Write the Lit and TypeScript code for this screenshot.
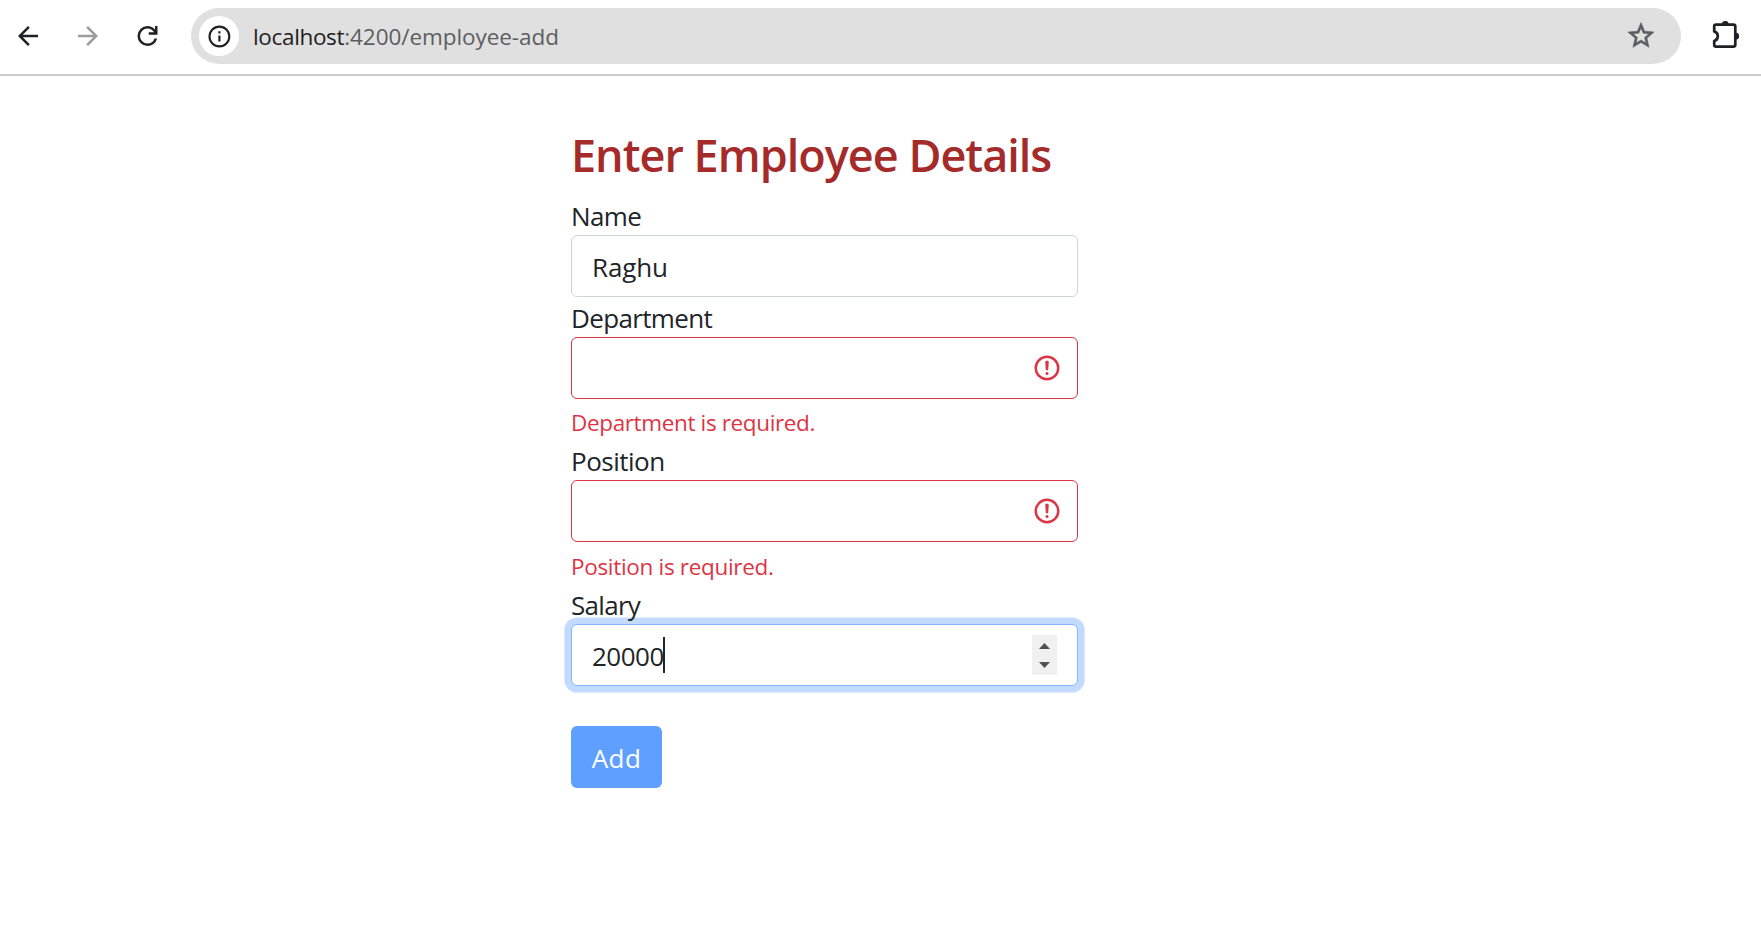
import { LitElement, html, css, nothing } from "lit";
import { customElement, property } from "lit/decorators.js";
import { classMap } from "lit/directives/class-map.js";

@customElement("browser-bar")
export class BrowserBar extends LitElement {
  static styles = css`
    :host {
      display: flex;
      align-items: flex-start;
      box-sizing: border-box;
      height: 76px;
      padding: 8px 0 0 13px;
      border-bottom: 2px solid #cccccc;
      background: #fff;
      font-family: "Open Sans", sans-serif;
      color: #202124;
    }
    svg { display: block; flex: none; }
    .nav { display: flex; gap: 30px; align-items: center; height: 56px; }
    .muted { color: #9c9c9d; }
    .address {
      display: flex;
      align-items: center;
      box-sizing: border-box;
      width: 1490px;
      height: 56px;
      margin-left: 28px;
      padding: 0 24px 0 8px;
      border-radius: 28px;
      background: #e0e0e0;
    }
    .info {
      display: grid;
      place-items: center;
      width: 40px;
      height: 40px;
      border-radius: 50%;
      background: #fff;
    }
    .url {
      flex: 1;
      padding: 1px 0 0 14px;
      font-size: 22.5px;
      line-height: 56px;
      color: #5d5e60;
      letter-spacing: -0.066px;
      white-space: nowrap;
    }
    .host { color: #1f2023; letter-spacing: -0.341px; }
    .star { color: #5c5d60; }
    .ext { margin: 10px 0 0 28px; }
  `;

  render() {
    return html`
      <div class="nav">
        <svg width="30" height="30" viewBox="0 0 24 24" fill="currentColor">
          <path d="M7.83 13l5.6 5.6L12 20l-8-8 8-8 1.43 1.4L7.83 11H20v2z" />
        </svg>
        <svg class="muted" width="30" height="30" viewBox="0 0 24 24" fill="currentColor">
          <path d="M16.17 13l-5.6 5.6L12 20l8-8-8-8-1.43 1.4 5.6 5.6H4v2z" />
        </svg>
        <svg width="30" height="30" viewBox="16 -960 960 960" fill="currentColor">
          <path d="M480-160q-134 0-227-93t-93-227q0-134 93-227t227-93q69 0 132 28.500T720-690v-110h80v280H520v-80h168q-32-56-87.500-88T480-720q-100 0-170 70t-70 170q0 100 70 170t170 70q77 0 139-44t87-116h84q-28 106-114 173t-196 67Z" />
        </svg>
      </div>
      <div class="address">
        <span class="info">
          <svg width="24" height="24" viewBox="0 0 24 24">
            <circle cx="12.400" cy="12.500" r="9.900" fill="none" stroke="currentColor" stroke-width="2.100" />
            <path d="M11.300 11.500h2.200v6h-2.200zM11.300 7.300h2.200v2.200h-2.200z" fill="currentColor" />
          </svg>
        </span>
        <div class="url"><span class="host">localhost</span>:4200/employee-add</div>
        <svg class="star" width="32" height="32" viewBox="-0.300 0 24.600 24.600" fill="currentColor" stroke="currentColor" stroke-width="0.450">
          <path d="M22 9.240l-7.190-.62L12 2 9.190 8.630 2 9.240l5.460 4.730L5.820 21 12 17.270 18.180 21l-1.630-7.030zM12 15.400l-3.760 2.270 1-4.280-3.320-2.880 4.380-.38L12 6.100l1.710 4.040 4.380.38-3.320 2.880 1 4.280z" />
        </svg>
      </div>
      <svg class="ext" width="36" height="36" viewBox="0 0 36 36">
        <path d="M7 6.700H24.500Q26.300 6.700 26.300 8.500V26.800Q26.300 28.600 24.500 28.600H7Q5.200 28.600 5.200 26.800V23A5 5 0 0 0 5.200 13.400V8.500Q5.200 6.700 7 6.700Z" fill="none" stroke="currentColor" stroke-width="2.700" stroke-linejoin="round" />
        <path d="M12.900 6.500a3.400 3.400 0 0 1 6.800 0zM26.700 14.800a3.400 3.400 0 0 1 0 6.800z" fill="currentColor" />
      </svg>
    `;
  }
}

@customElement("form-field")
export class FormField extends LitElement {
  @property() label = "";
  @property() value = "";
  @property() error = "";
  @property() kind = "text";
  @property({ type: Boolean }) active = false;

  static styles = css`
    :host { display: block; }
    .label {
      height: 40px;
      font-size: 26px;
      line-height: 42px;
      letter-spacing: -0.600px;
      color: #212529;
      position: relative;
      z-index: 1;
    }
    .department { letter-spacing: -0.648px; }
    .position { letter-spacing: -0.500px; }
    .salary { letter-spacing: -0.700px; }
    .control {
      display: flex;
      align-items: center;
      justify-content: space-between;
      box-sizing: border-box;
      height: 62px;
      padding: 0 15px 0 20px;
      border: 1px solid #ced4da;
      border-radius: 6px;
      background: #fff;
      color: #212529;
    }
    .control.invalid { border-color: #dc3545; }
    .control.active {
      padding-right: 20px;
      border-color: #86b7fe;
      box-shadow: 0 0 0 6.600px #c2dbfe;
    }
    .value {
      display: flex;
      align-items: center;
      font-size: 26px;
      line-height: 60px;
      letter-spacing: -0.139px;
    }
    .value span { padding-top: 2px; }
    .value.number { letter-spacing: -0.500px; }
    .caret { width: 2px; height: 36px; margin-left: -0.500px; background: #212529; }
    .spinner {
      display: flex;
      flex-direction: column;
      justify-content: space-between;
      align-items: center;
      box-sizing: border-box;
      width: 25px;
      height: 40px;
      padding: 8px 0 7px;
      background: #f0f0f0;
    }
    svg { display: block; }
    .feedback {
      height: 35px;
      margin-top: 6px;
      font-size: 22.5px;
      line-height: 35px;
      letter-spacing: -0.363px;
      color: #dc3545;
      white-space: nowrap;
    }
    .feedback.position { margin-top: 7px; letter-spacing: -0.313px; }
  `;

  private alertIcon() {
    return html`<svg width="30" height="30" viewBox="0 0 12 12" fill="none" stroke="#dc3545">
      <circle cx="6" cy="6" r="4.500" />
      <path stroke-linejoin="round" d="M5.800 3.600h.4L6 6.500z" />
      <circle cx="6" cy="8.200" r=".6" fill="#dc3545" stroke="none" />
    </svg>`;
  }

  private spinner() {
    return html`<span class="spinner">
      <svg width="11" height="6" viewBox="0 0 11 6"><path d="M0 6L5.500 0L11 6z" fill="#505050" /></svg>
      <svg width="11" height="6" viewBox="0 0 11 6"><path d="M0 0L5.500 6L11 0z" fill="#505050" /></svg>
    </span>`;
  }

  render() {
    const name = this.label.toLowerCase();
    const number = this.kind === "number";
    return html`
      <div class="label ${name}">${this.label}</div>
      <div class=${classMap({ control: true, invalid: !!this.error, active: this.active })}>
        <div class=${classMap({ value: true, number })}>
          <span>${this.value}</span>${this.active ? html`<i class="caret"></i>` : nothing}
        </div>
        ${this.error ? this.alertIcon() : nothing}${number ? this.spinner() : nothing}
      </div>
      ${this.error ? html`<div class="feedback ${name}">${this.error}</div>` : nothing}
    `;
  }
}

@customElement("app-root")
export class AppRoot extends LitElement {
  static styles = css`
    :host {
      display: block;
      min-height: 934px;
      background: #fff;
      font-family: "Open Sans", sans-serif;
    }
    .page { width: 507px; padding: 51px 0 0 571px; }
    h1 {
      margin: 0 0 13px;
      font-size: 45px;
      font-weight: 600;
      line-height: 55px;
      letter-spacing: -0.990px;
      color: #a52a2a;
      white-space: nowrap;
    }
    .add {
      display: block;
      width: 91px;
      height: 62px;
      margin: 40px 0 0;
      padding: 2px 0 0;
      border: 0;
      border-radius: 6px;
      background: #5f9fff;
      color: #fff;
      font: 26px/60px "Open Sans", sans-serif;
      letter-spacing: 0.400px;
    }
  `;

  render() {
    return html`
      <browser-bar></browser-bar>
      <main class="page">
        <h1>Enter Employee Details</h1>
        <form-field label="Name" value="Raghu"></form-field>
        <form-field label="Department" error="Department is required."></form-field>
        <form-field label="Position" error="Position is required."></form-field>
        <form-field label="Salary" value="20000" kind="number" active></form-field>
        <button class="add" type="button">Add</button>
      </main>
    `;
  }
}
